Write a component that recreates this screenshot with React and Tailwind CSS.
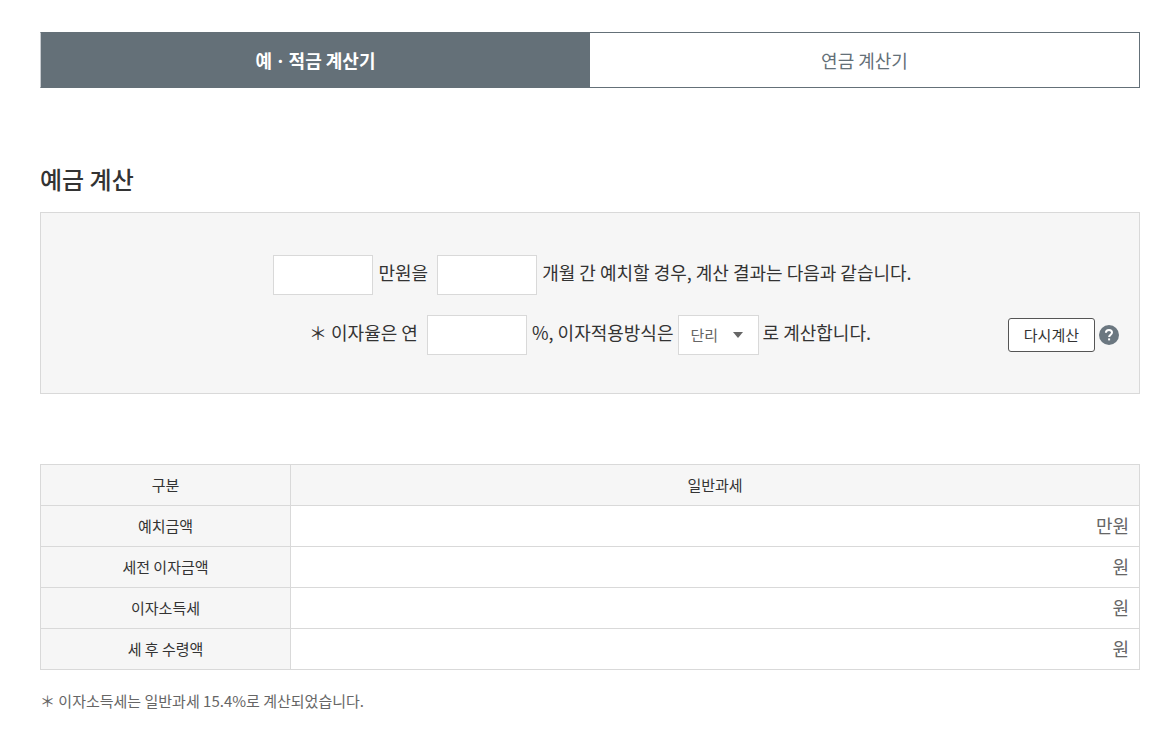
import { useState } from "react";

const TABS = ["예ㆍ적금 계산기", "연금 계산기"];

const ROWS = [
  { label: "예치금액", unit: "만원" },
  { label: "세전 이자금액", unit: "원" },
  { label: "이자소득세", unit: "원" },
  { label: "세 후 수령액", unit: "원" },
];

function NumberField({ id, value, onChange }) {
  return (
    <input
      id={id}
      type="text"
      inputMode="decimal"
      value={value}
      onChange={(e) => onChange(e.target.value)}
      className="mr-px ml-[5px] h-10 w-[100px] border border-[#d9d9d9] bg-white px-2 text-right align-middle"
    />
  );
}

function HelpIcon() {
  return (
    <svg width="20" height="20" viewBox="0 0 20 20" aria-hidden="true">
      <circle cx="10" cy="10" r="10" fill="#6b7780" />
      <path
        d="M6.9 7.7C6.9 5.9 8.2 4.9 10 4.9s3 1 3 2.6c0 2.1-2.9 2.3-2.9 4.6"
        fill="none"
        stroke="#fff"
        strokeWidth="2"
      />
      <rect x="9.1" y="13.4" width="2" height="2" fill="#fff" />
    </svg>
  );
}

export default function App() {
  const [tab, setTab] = useState(0);
  const [amount, setAmount] = useState("");
  const [months, setMonths] = useState("");
  const [rate, setRate] = useState("");
  const [method, setMethod] = useState("단리");

  const reset = () => {
    setAmount("");
    setMonths("");
    setRate("");
    setMethod("단리");
  };

  return (
    <main className="bg-white pt-8 pr-[31px] pb-10 pl-10 font-['Noto_Sans_CJK_KR','Noto_Sans',sans-serif] text-lg text-[#333]">
      <div className="flex h-14 border-y border-r border-l border-[#647078] border-l-[#c8ccd0]">
        {TABS.map((name, i) => (
          <button
            key={name}
            type="button"
            onClick={() => setTab(i)}
            className={
              i === tab
                ? "flex-1 bg-[#647078] font-bold text-white"
                : "flex-1 bg-white text-[#647078]"
            }
          >
            {name}
          </button>
        ))}
      </div>

      <h2 className="mt-[73px] text-2xl leading-9 font-medium">예금 계산</h2>

      <form className="mt-[15px] flex flex-col gap-5 border border-[#d9d9d9] bg-[#f6f6f6] px-5 pt-[42px] pb-[38px]">
        <div className="text-center leading-8">
          <NumberField id="amount" value={amount} onChange={setAmount} />{" "}
          <label htmlFor="amount">만원을</label>{" "}
          <NumberField id="months" value={months} onChange={setMonths} />{" "}
          <label htmlFor="months">개월 간 예치할 경우, 계산 결과는 다음과 같습니다.</label>
        </div>
        <div className="grid grid-cols-[1fr_auto_1fr] items-center">
          <div className="col-start-2 leading-8">
            <label htmlFor="rate">＊ 이자율은 연</label>{" "}
            <NumberField id="rate" value={rate} onChange={setRate} />{" "}
            <label htmlFor="method">%, 이자적용방식은</label>{" "}
            <span className="relative inline-block align-middle">
              <select
                id="method"
                value={method}
                onChange={(e) => setMethod(e.target.value)}
                className="block h-10 w-[81px] appearance-none border border-[#d9d9d9] bg-white pl-3 text-[15px] text-[#666]"
              >
                <option>단리</option>
                <option>복리</option>
              </select>
              <svg
                width="10"
                height="6"
                viewBox="0 0 10 6"
                className="pointer-events-none absolute top-[17px] right-4"
                aria-hidden="true"
              >
                <path d="M0 0h10L5 6z" fill="#666" />
              </svg>
            </span>{" "}
            <span>로 계산합니다.</span>
          </div>
          <div className="flex items-center justify-end gap-1">
            <button
              type="button"
              onClick={reset}
              className="h-[34px] rounded-[3px] border border-[#555] bg-white px-[15px] text-[15px]"
            >
              다시계산
            </button>
            <button type="button" aria-label="도움말">
              <HelpIcon />
            </button>
          </div>
        </div>
      </form>

      <table className="mt-[70px] w-full table-fixed border-collapse">
        <thead>
          <tr className="h-[41px] bg-[#f6f6f6] text-[15px]">
            <th scope="col" className="w-[250px] border border-[#d9d9d9] font-normal">
              구분
            </th>
            <th scope="col" className="border border-[#d9d9d9] font-normal">
              일반과세
            </th>
          </tr>
        </thead>
        <tbody>
          {ROWS.map((row) => (
            <tr key={row.label} className="h-[41px]">
              <th
                scope="row"
                className="border border-[#d9d9d9] bg-[#f6f6f6] text-[15px] font-normal"
              >
                {row.label}
              </th>
              <td className="border border-[#d9d9d9] pr-[10px] pb-0.5 text-right text-[#666]">
                {row.unit}
              </td>
            </tr>
          ))}
        </tbody>
      </table>

      <p className="mt-[19px] text-[15px] leading-6 text-[#666]">
        ＊ 이자소득세는 일반과세 15.4%로 계산되었습니다.
      </p>
    </main>
  );
}
